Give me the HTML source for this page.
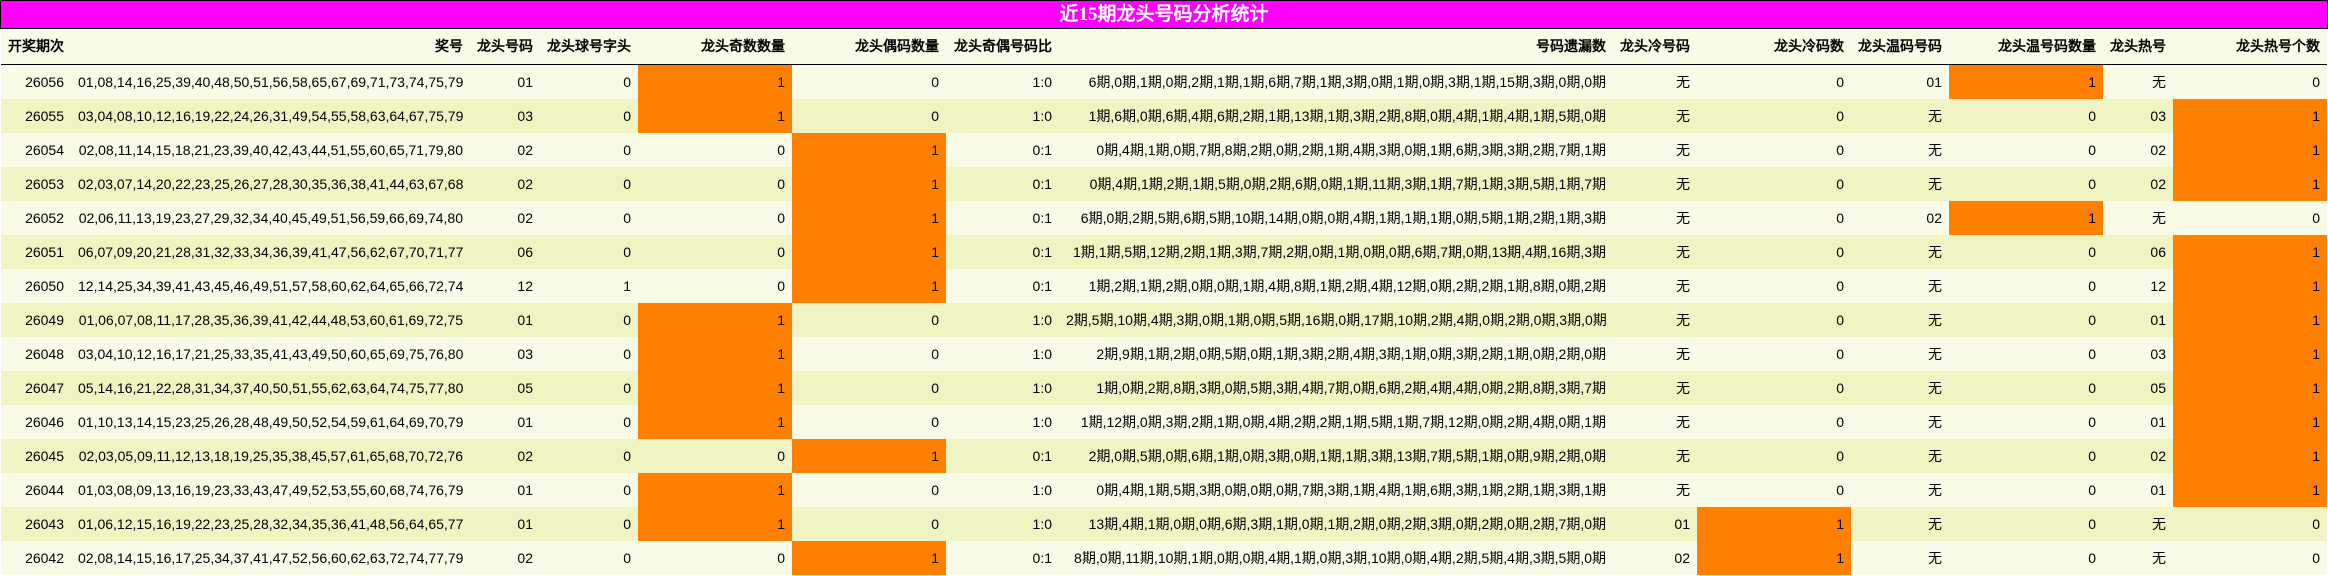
<!DOCTYPE html>
<html lang="zh-CN"><head><meta charset="utf-8"><title>近15期龙头号码分析统计</title>
<style>
html,body{margin:0;padding:0;background:#fff;width:2328px;height:576px;overflow:hidden}
body{font:14px/34px "Liberation Sans","WenQuanYi Zen Hei",sans-serif;color:#000}
.t{position:absolute;left:0;top:0;width:2326px;height:27px;border:1px solid #000;background:#f0f;color:#fff;text-align:center;font:bold 19px/27px "Liberation Serif","WenQuanYi Zen Hei",serif}
table{position:absolute;left:1px;top:29px;width:2326px;table-layout:fixed;border-collapse:separate;border-spacing:0;background:#f9fbe7}
th,td{padding:0 7px;text-align:right;white-space:nowrap;overflow:hidden;height:34px;line-height:34px}
th{height:35px;line-height:35px;font-weight:bold;border-bottom:1px solid #000;color:#000}
th:first-child{text-align:left}
tbody tr:nth-child(even){background:#f0f4c3}
td.o{background:#ff7f00}
</style></head><body>
<div class="t">近15期龙头号码分析统计</div>
<table>
<colgroup><col style="width:70px"><col style="width:399px"><col style="width:70px"><col style="width:98px"><col style="width:154px"><col style="width:154px"><col style="width:113px"><col style="width:554px"><col style="width:84px"><col style="width:154px"><col style="width:98px"><col style="width:154px"><col style="width:70px"><col style="width:154px"></colgroup>
<thead><tr><th>开奖期次</th><th>奖号</th><th>龙头号码</th><th>龙头球号字头</th><th>龙头奇数数量</th><th>龙头偶码数量</th><th>龙头奇偶号码比</th><th>号码遗漏数</th><th>龙头冷号码</th><th>龙头冷码数</th><th>龙头温码号码</th><th>龙头温号码数量</th><th>龙头热号</th><th>龙头热号个数</th></tr></thead>
<tbody>
<tr><td>26056</td><td>01,08,14,16,25,39,40,48,50,51,56,58,65,67,69,71,73,74,75,79</td><td>01</td><td>0</td><td class="o">1</td><td>0</td><td>1:0</td><td>6期,0期,1期,0期,2期,1期,1期,6期,7期,1期,3期,0期,1期,0期,3期,1期,15期,3期,0期,0期</td><td>无</td><td>0</td><td>01</td><td class="o">1</td><td>无</td><td>0</td></tr>
<tr><td>26055</td><td>03,04,08,10,12,16,19,22,24,26,31,49,54,55,58,63,64,67,75,79</td><td>03</td><td>0</td><td class="o">1</td><td>0</td><td>1:0</td><td>1期,6期,0期,6期,4期,6期,2期,1期,13期,1期,3期,2期,8期,0期,4期,1期,4期,1期,5期,0期</td><td>无</td><td>0</td><td>无</td><td>0</td><td>03</td><td class="o">1</td></tr>
<tr><td>26054</td><td>02,08,11,14,15,18,21,23,39,40,42,43,44,51,55,60,65,71,79,80</td><td>02</td><td>0</td><td>0</td><td class="o">1</td><td>0:1</td><td>0期,4期,1期,0期,7期,8期,2期,0期,2期,1期,4期,3期,0期,1期,6期,3期,3期,2期,7期,1期</td><td>无</td><td>0</td><td>无</td><td>0</td><td>02</td><td class="o">1</td></tr>
<tr><td>26053</td><td>02,03,07,14,20,22,23,25,26,27,28,30,35,36,38,41,44,63,67,68</td><td>02</td><td>0</td><td>0</td><td class="o">1</td><td>0:1</td><td>0期,4期,1期,2期,1期,5期,0期,2期,6期,0期,1期,11期,3期,1期,7期,1期,3期,5期,1期,7期</td><td>无</td><td>0</td><td>无</td><td>0</td><td>02</td><td class="o">1</td></tr>
<tr><td>26052</td><td>02,06,11,13,19,23,27,29,32,34,40,45,49,51,56,59,66,69,74,80</td><td>02</td><td>0</td><td>0</td><td class="o">1</td><td>0:1</td><td>6期,0期,2期,5期,6期,5期,10期,14期,0期,0期,4期,1期,1期,1期,0期,5期,1期,2期,1期,3期</td><td>无</td><td>0</td><td>02</td><td class="o">1</td><td>无</td><td>0</td></tr>
<tr><td>26051</td><td>06,07,09,20,21,28,31,32,33,34,36,39,41,47,56,62,67,70,71,77</td><td>06</td><td>0</td><td>0</td><td class="o">1</td><td>0:1</td><td>1期,1期,5期,12期,2期,1期,3期,7期,2期,0期,1期,0期,0期,6期,7期,0期,13期,4期,16期,3期</td><td>无</td><td>0</td><td>无</td><td>0</td><td>06</td><td class="o">1</td></tr>
<tr><td>26050</td><td>12,14,25,34,39,41,43,45,46,49,51,57,58,60,62,64,65,66,72,74</td><td>12</td><td>1</td><td>0</td><td class="o">1</td><td>0:1</td><td>1期,2期,1期,2期,0期,0期,1期,4期,8期,1期,2期,4期,12期,0期,2期,2期,1期,8期,0期,2期</td><td>无</td><td>0</td><td>无</td><td>0</td><td>12</td><td class="o">1</td></tr>
<tr><td>26049</td><td>01,06,07,08,11,17,28,35,36,39,41,42,44,48,53,60,61,69,72,75</td><td>01</td><td>0</td><td class="o">1</td><td>0</td><td>1:0</td><td>2期,5期,10期,4期,3期,0期,1期,0期,5期,16期,0期,17期,10期,2期,4期,0期,2期,0期,3期,0期</td><td>无</td><td>0</td><td>无</td><td>0</td><td>01</td><td class="o">1</td></tr>
<tr><td>26048</td><td>03,04,10,12,16,17,21,25,33,35,41,43,49,50,60,65,69,75,76,80</td><td>03</td><td>0</td><td class="o">1</td><td>0</td><td>1:0</td><td>2期,9期,1期,2期,0期,5期,0期,1期,3期,2期,4期,3期,1期,0期,3期,2期,1期,0期,2期,0期</td><td>无</td><td>0</td><td>无</td><td>0</td><td>03</td><td class="o">1</td></tr>
<tr><td>26047</td><td>05,14,16,21,22,28,31,34,37,40,50,51,55,62,63,64,74,75,77,80</td><td>05</td><td>0</td><td class="o">1</td><td>0</td><td>1:0</td><td>1期,0期,2期,8期,3期,0期,5期,3期,4期,7期,0期,6期,2期,4期,4期,0期,2期,8期,3期,7期</td><td>无</td><td>0</td><td>无</td><td>0</td><td>05</td><td class="o">1</td></tr>
<tr><td>26046</td><td>01,10,13,14,15,23,25,26,28,48,49,50,52,54,59,61,64,69,70,79</td><td>01</td><td>0</td><td class="o">1</td><td>0</td><td>1:0</td><td>1期,12期,0期,3期,2期,1期,0期,4期,2期,2期,1期,5期,1期,7期,12期,0期,2期,4期,0期,1期</td><td>无</td><td>0</td><td>无</td><td>0</td><td>01</td><td class="o">1</td></tr>
<tr><td>26045</td><td>02,03,05,09,11,12,13,18,19,25,35,38,45,57,61,65,68,70,72,76</td><td>02</td><td>0</td><td>0</td><td class="o">1</td><td>0:1</td><td>2期,0期,5期,0期,6期,1期,0期,3期,0期,1期,1期,3期,13期,7期,5期,1期,0期,9期,2期,0期</td><td>无</td><td>0</td><td>无</td><td>0</td><td>02</td><td class="o">1</td></tr>
<tr><td>26044</td><td>01,03,08,09,13,16,19,23,33,43,47,49,52,53,55,60,68,74,76,79</td><td>01</td><td>0</td><td class="o">1</td><td>0</td><td>1:0</td><td>0期,4期,1期,5期,3期,0期,0期,0期,7期,3期,1期,4期,1期,6期,3期,1期,2期,1期,3期,1期</td><td>无</td><td>0</td><td>无</td><td>0</td><td>01</td><td class="o">1</td></tr>
<tr><td>26043</td><td>01,06,12,15,16,19,22,23,25,28,32,34,35,36,41,48,56,64,65,77</td><td>01</td><td>0</td><td class="o">1</td><td>0</td><td>1:0</td><td>13期,4期,1期,0期,0期,6期,3期,1期,0期,1期,2期,0期,2期,3期,0期,2期,0期,2期,7期,0期</td><td>01</td><td class="o">1</td><td>无</td><td>0</td><td>无</td><td>0</td></tr>
<tr><td>26042</td><td>02,08,14,15,16,17,25,34,37,41,47,52,56,60,62,63,72,74,77,79</td><td>02</td><td>0</td><td>0</td><td class="o">1</td><td>0:1</td><td>8期,0期,11期,10期,1期,0期,0期,4期,1期,0期,3期,10期,0期,4期,2期,5期,4期,3期,5期,0期</td><td>02</td><td class="o">1</td><td>无</td><td>0</td><td>无</td><td>0</td></tr>
</tbody></table>
</body></html>
